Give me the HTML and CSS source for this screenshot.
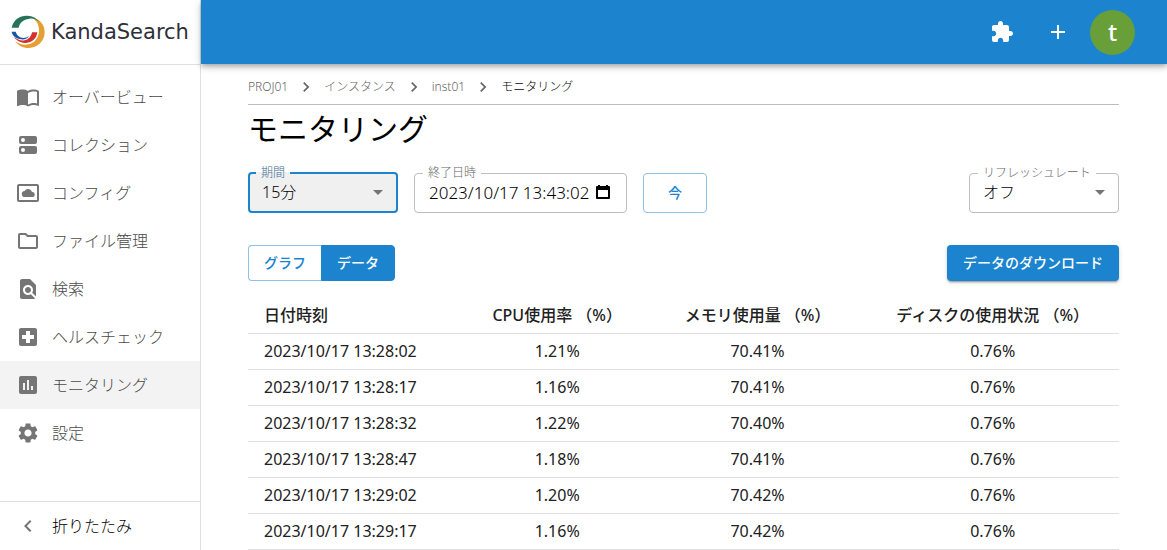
FILE: index.html
```html
<!DOCTYPE html>
<html lang="ja">
<head>
<meta charset="utf-8">
<title>KandaSearch</title>
<link rel="stylesheet" href="styles.css">
</head>
<body>
<div class="app">
  <aside class="sidebar">
    <a class="brand" href="#">
      <svg class="brand-mark" viewBox="33 46 102 102" aria-hidden="true">
        <path fill="#e69f32" d="M98 56C120 58 134 76 134 98C134 124 113 145 86 145C68 145 54 138 46 124C58 134 72 137 85 134C105 130 118 112 117 90C116 74 110 64 98 56Z"/>
        <path fill="#26735a" d="M35 84C40 60 60 47 82 48C98 49 110 55 119 67C108 58 98 55 88 57C70 59 58 70 56 84Z"/>
        <path fill="#d6302f" d="M112 98C110 116 96 129 78 130C62 130 48 122 41 112C52 120 64 124 74 122C86 119 94 110 96 98Z"/>
        <path fill="#1558a5" d="M35 96H47C50 106 58 114 70 115C76 115 82 113 87 109C82 117 74 121 64 119C48 117 38 110 35 96Z"/>
      </svg>
      <span class="brand-name">KandaSearch</span>
    </a>
    <nav class="menu">
      <a class="menu-item" href="#"><svg class="icon" viewBox="0 0 24 24"><path d="M21 5c-1.11-.35-2.33-.5-3.5-.5-1.95 0-4.05.4-5.5 1.5-1.45-1.1-3.55-1.5-5.5-1.5S2.45 4.9 1 6v14.65c0 .25.25.5.5.5.1 0 .15-.05.25-.05C3.1 20.45 5.05 20 6.5 20c1.95 0 4.05.4 5.5 1.5 1.35-.85 3.8-1.5 5.5-1.5 1.65 0 3.35.3 4.75 1.05.1.05.15.05.25.05.25 0 .5-.25.5-.5V6c-.6-.45-1.25-.75-2-1zm0 13.5c-1.1-.35-2.3-.5-3.5-.5-1.7 0-4.15.65-5.5 1.5V8c1.35-.85 3.8-1.5 5.5-1.5 1.2 0 2.4.15 3.5.5v11.5z"/></svg>オーバービュー</a>
      <a class="menu-item" href="#"><svg class="icon" viewBox="0 0 24 24"><path fill-rule="evenodd" d="M5 3h14a2 2 0 0 1 2 2v4a2 2 0 0 1-2 2H5a2 2 0 0 1-2-2V5a2 2 0 0 1 2-2zm2 2a2 2 0 1 0 0 4 2 2 0 0 0 0-4zM5 13h14a2 2 0 0 1 2 2v4a2 2 0 0 1-2 2H5a2 2 0 0 1-2-2v-4a2 2 0 0 1 2-2zm2 2a2 2 0 1 0 0 4 2 2 0 0 0 0-4z"/></svg>コレクション</a>
      <a class="menu-item" href="#"><svg class="icon" viewBox="0 0 24 24"><path fill-rule="evenodd" d="M3 3h18a2 2 0 0 1 2 2v14a2 2 0 0 1-2 2H3a2 2 0 0 1-2-2V5a2 2 0 0 1 2-2zm0 2v14h18V5z"/><path d="M9 16a3 3 0 0 1-.4-6A4 4 0 0 1 16 11a2.500 2.500 0 0 1 .5 5z"/></svg>コンフィグ</a>
      <a class="menu-item" href="#"><svg class="icon" viewBox="0 0 24 24"><path d="M9.170 6l2 2H20v10H4V6h5.170M10 4H4c-1.100 0-1.990.9-1.990 2L2 18c0 1.100.9 2 2 2h16c1.100 0 2-.9 2-2V8c0-1.100-.9-2-2-2h-8l-2-2z"/></svg>ファイル管理</a>
      <a class="menu-item" href="#"><svg class="icon" viewBox="0 0 24 24"><path d="M20 19.590V8l-6-6H6c-1.100 0-1.990.9-1.990 2L4 20c0 1.100.89 2 1.990 2H18c.45 0 .85-.15 1.190-.4l-4.430-4.430c-.8.52-1.740.83-2.760.83-2.760 0-5-2.240-5-5s2.240-5 5-5 5 2.240 5 5c0 1.020-.31 1.960-.83 2.750L20 19.590zM9 13c0 1.660 1.340 3 3 3s3-1.340 3-3-1.340-3-3-3-3 1.340-3 3z"/></svg>検索</a>
      <a class="menu-item" href="#"><svg class="icon" viewBox="0 0 24 24"><path d="M19 3H5c-1.100 0-2 .9-2 2v14c0 1.100.9 2 2 2h14c1.100 0 2-.9 2-2V5c0-1.100-.9-2-2-2zm-1 11h-4v4h-4v-4H6v-4h4V6h4v4h4v4z"/></svg>ヘルスチェック</a>
      <a class="menu-item is-active" href="#" aria-current="page"><svg class="icon" viewBox="0 0 24 24"><path d="M19 3H5c-1.100 0-2 .9-2 2v14c0 1.100.9 2 2 2h14c1.100 0 2-.9 2-2V5c0-1.100-.9-2-2-2zM9 17H7v-7h2v7zm4 0h-2V7h2v10zm4 0h-2v-4h2v4z"/></svg>モニタリング</a>
      <a class="menu-item" href="#"><svg class="icon" viewBox="0 0 24 24"><path d="M19.140 12.940c.04-.3.06-.61.06-.94 0-.32-.02-.64-.07-.94l2.030-1.580c.18-.14.23-.41.12-.61l-1.920-3.320c-.12-.22-.37-.29-.59-.22l-2.390.96c-.5-.38-1.030-.7-1.620-.94l-.36-2.540c-.04-.24-.24-.41-.48-.41h-3.840c-.24 0-.43.17-.47.41l-.36 2.540c-.59.24-1.130.57-1.620.94l-2.390-.96c-.22-.08-.47 0-.59.22L2.740 8.870c-.12.21-.08.47.12.61l2.030 1.580c-.05.3-.09.63-.09.94s.02.64.07.94l-2.030 1.580c-.18.14-.23.41-.12.61l1.920 3.320c.12.22.37.29.59.22l2.390-.96c.5.38 1.030.7 1.620.94l.36 2.540c.05.24.24.41.48.41h3.840c.24 0 .44-.17.47-.41l.36-2.540c.59-.24 1.130-.56 1.620-.94l2.390.96c.22.08.47 0 .59-.22l1.920-3.320c.12-.22.07-.47-.12-.61l-2.010-1.580zM12 15.600c-1.980 0-3.600-1.620-3.600-3.600s1.620-3.600 3.600-3.600 3.600 1.620 3.600 3.600-1.620 3.600-3.600 3.600z"/></svg>設定</a>
    </nav>
    <button class="collapse" type="button"><svg class="icon" viewBox="0 0 24 24"><path d="M15.410 7.410L14 6l-6 6 6 6 1.410-1.410L10.830 12z"/></svg>折りたたみ</button>
  </aside>

  <div class="page">
    <header class="topbar">
      <button class="icon-button" type="button" aria-label="拡張機能"><svg class="icon" viewBox="0 0 24 24"><path d="M20.500 11H19V7c0-1.100-.9-2-2-2h-4V3.500C13 2.120 11.880 1 10.500 1S8 2.120 8 3.500V5H4c-1.100 0-1.990.9-1.990 2v3.800H3.500c1.490 0 2.700 1.210 2.700 2.700s-1.210 2.700-2.700 2.700H2V20c0 1.100.9 2 2 2h3.800v-1.500c0-1.490 1.210-2.700 2.700-2.700 1.490 0 2.700 1.210 2.700 2.700V22H17c1.100 0 2-.9 2-2v-4h1.500c1.380 0 2.500-1.120 2.500-2.500S21.880 11 20.500 11z"/></svg></button>
      <button class="icon-button" type="button" aria-label="追加"><svg class="icon" viewBox="0 0 24 24"><path d="M19 13h-6v6h-2v-6H5v-2h6V5h2v6h6v2z"/></svg></button>
      <button class="avatar" type="button">t</button>
    </header>

    <main class="content">
      <nav class="crumbs">
        <a href="#">PROJ01</a>
        <svg class="crumb-sep" viewBox="0 0 24 24"><path d="M10 6L8.590 7.410 13.170 12l-4.580 4.590L10 18l6-6z"/></svg>
        <a href="#">インスタンス</a>
        <svg class="crumb-sep" viewBox="0 0 24 24"><path d="M10 6L8.590 7.410 13.170 12l-4.580 4.590L10 18l6-6z"/></svg>
        <a href="#">inst01</a>
        <svg class="crumb-sep" viewBox="0 0 24 24"><path d="M10 6L8.590 7.410 13.170 12l-4.580 4.590L10 18l6-6z"/></svg>
        <span class="crumb-current">モニタリング</span>
      </nav>
      <h1 class="title">モニタリング</h1>

      <div class="filters">
        <fieldset class="field is-focused">
          <legend><label for="period">期間</label></legend>
          <div class="control">
            <select id="period"><option>15分</option></select>
            <svg class="arrow" viewBox="0 0 24 24"><path d="M7 10l5 5 5-5z"/></svg>
          </div>
        </fieldset>
        <fieldset class="field field-date">
          <legend><label for="end">終了日時</label></legend>
          <div class="control">
            <input id="end" type="text" value="2023/10/17 13:43:02">
            <button class="calendar" type="button" aria-label="日付を選択"><svg viewBox="0 0 16 16"><path fill-rule="evenodd" d="M3 1h2v1h6V1h2v1h1a1 1 0 0 1 1 1v11a1 1 0 0 1-1 1H2a1 1 0 0 1-1-1V3a1 1 0 0 1 1-1h1zM3 6v7h10V6z"/></svg></button>
          </div>
        </fieldset>
        <button class="now" type="button">今</button>
        <fieldset class="field field-end">
          <legend><label for="refresh">リフレッシュレート</label></legend>
          <div class="control">
            <select id="refresh"><option>オフ</option></select>
            <svg class="arrow" viewBox="0 0 24 24"><path d="M7 10l5 5 5-5z"/></svg>
          </div>
        </fieldset>
      </div>

      <div class="actions">
        <div class="toggle">
          <button type="button">グラフ</button>
          <button type="button" class="is-on" aria-pressed="true">データ</button>
        </div>
        <button class="download" type="button">データのダウンロード</button>
      </div>

      <table class="metrics">
        <colgroup><col class="col-date"><col class="col-cpu"><col class="col-memory"><col class="col-disk"></colgroup>
        <thead>
          <tr><th scope="col">日付時刻</th><th scope="col">CPU使用率 （%）</th><th scope="col">メモリ使用量 （%）</th><th scope="col">ディスクの使用状況 （%）</th></tr>
        </thead>
        <tbody>
          <tr><td>2023/10/17 13:28:02</td><td>1.21%</td><td>70.41%</td><td>0.76%</td></tr>
          <tr><td>2023/10/17 13:28:17</td><td>1.16%</td><td>70.41%</td><td>0.76%</td></tr>
          <tr><td>2023/10/17 13:28:32</td><td>1.22%</td><td>70.40%</td><td>0.76%</td></tr>
          <tr><td>2023/10/17 13:28:47</td><td>1.18%</td><td>70.41%</td><td>0.76%</td></tr>
          <tr><td>2023/10/17 13:29:02</td><td>1.20%</td><td>70.42%</td><td>0.76%</td></tr>
          <tr><td>2023/10/17 13:29:17</td><td>1.16%</td><td>70.42%</td><td>0.76%</td></tr>
        </tbody>
      </table>
    </main>
  </div>
</div>
</body>
</html>
```
FILE: styles.css
```css
* { box-sizing: border-box; }

body {
  margin: 0;
  background: #fff;
  color: #212121;
  font: 300 16px/24px "Noto Sans", "Noto Sans CJK JP", sans-serif;
}

button, input, select { font: inherit; color: inherit; }
button { cursor: pointer; }
a { color: inherit; text-decoration: none; }
svg { display: block; flex: none; fill: currentColor; }

.app { display: flex; min-height: 100vh; }

/* Sidebar */
.sidebar {
  display: flex;
  flex-direction: column;
  flex: none;
  width: 201px;
  border-right: 1px solid #e0e0e0;
}
.brand {
  display: flex;
  align-items: center;
  gap: 6px;
  height: 65px;
  padding-left: 11px;
  border-bottom: 1px solid #e0e0e0;
}
.brand-mark { width: 34px; height: 34px; }
.brand-name { color: #2e2f3a; font: 400 21px/24px "DejaVu Sans", sans-serif; }
.menu { flex: 1; padding-top: 8px; }
.menu-item {
  display: flex;
  align-items: center;
  gap: 12px;
  height: 48px;
  padding: 0 16px;
  color: #4a4a4a;
}
.menu-item.is-active { background: #f3f3f3; }
.icon { width: 24px; height: 24px; }
.menu-item .icon, .collapse .icon { fill: #757575; }
.collapse {
  display: flex;
  align-items: center;
  gap: 12px;
  height: 49px;
  padding: 0 16px;
  border: 0;
  border-top: 1px solid #e0e0e0;
  background: none;
  color: #000;
}

/* Top bar */
.page { flex: 1; min-width: 0; }
.topbar {
  display: flex;
  align-items: center;
  justify-content: flex-end;
  height: 64px;
  padding-right: 32px;
  background: #1c84ce;
  color: #fff;
  box-shadow: 0 2px 4px -1px rgba(0, 0, 0, .2), 0 4px 5px rgba(0, 0, 0, .14), 0 1px 10px rgba(0, 0, 0, .12);
}
.icon-button {
  margin-right: 8px;
  padding: 12px;
  border: 0;
  background: none;
}
.icon-button + .avatar { margin-left: 0; }
.avatar {
  width: 45px;
  height: 45px;
  padding: 0;
  border: 0;
  border-radius: 50%;
  background: #689f38;
  font-size: 24px;
  font-weight: 500;
}

/* Content */
.content { padding: 8px 48px 0 47px; }
.crumbs {
  display: flex;
  align-items: center;
  height: 33px;
  padding-bottom: 3px;
  border-bottom: 1px solid #bdbdbd;
  color: #666;
  font-size: 12px;
}
.crumb-sep { width: 20px; height: 20px; margin: 0 8px; }
.crumb-current { color: #000; }
.title { margin: 2px 0 0; color: #000; font-size: 30px; font-weight: 400; line-height: 44px; }

.filters { display: flex; align-items: flex-end; gap: 16px; padding-top: 16px; }
.field {
  width: 150px;
  height: 46px;
  min-width: 0;
  margin: 0;
  padding: 0;
  border: 1px solid #bdbdbd;
  border-radius: 4px;
}
.field legend {
  height: 12px;
  margin-left: 8px;
  padding: 0 5px;
  color: #666;
  font-size: 12px;
  line-height: 12px;
}
.field.is-focused { border: 2px solid #1c84ce; background: #f0f0f0; }
.field.is-focused legend { margin-left: 6px; color: #3f6c92; }
.field-date { width: 213px; }
.field-end { margin-left: auto; }
.control { display: flex; align-items: center; height: 26px; padding-right: 6px; }
.control select, .control input {
  flex: 1;
  min-width: 0;
  height: 26px;
  padding: 0 0 0 13px;
  border: 0;
  outline: 0;
  appearance: none;
  background: none;
  color: #000;
}
.field.is-focused select { padding-left: 12px; }
.control input { padding-left: 14px; font-size: 17px; }
.control .arrow { width: 24px; height: 24px; fill: #757575; }
.calendar { padding: 0 9px 0 0; border: 0; background: none; color: #000; }
.calendar svg { width: 16px; height: 16px; }
.now {
  width: 64px;
  height: 40px;
  border: 1px solid #8dc1e6;
  border-radius: 4px;
  background: none;
  color: #1c84ce;
  font-size: 14px;
  font-weight: 500;
}

.actions { display: flex; justify-content: space-between; padding: 32px 0 16px; }
.actions button { height: 36px; padding: 0 15px; font-size: 14px; font-weight: 500; }
.toggle { display: flex; }
.toggle button {
  border: 1px solid #8dc1e6;
  border-right: 0;
  border-radius: 4px 0 0 4px;
  background: none;
  color: #1c84ce;
}
.toggle .is-on {
  border: 1px solid #1c84ce;
  border-radius: 0 4px 4px 0;
  background: #1c84ce;
  color: #fff;
}
.actions .download {
  padding: 0 16px;
  border: 0;
  border-radius: 4px;
  background: #1c84ce;
  color: #fff;
  box-shadow: 0 3px 1px -2px rgba(0, 0, 0, .2), 0 2px 2px rgba(0, 0, 0, .14), 0 1px 5px rgba(0, 0, 0, .12);
}

.metrics { width: 100%; border-collapse: collapse; font-weight: 400; }
.metrics th, .metrics td {
  height: 36px;
  padding: 0 16px;
  border-bottom: 1px solid #e0e0e0;
  text-align: center;
  white-space: nowrap;
}
.metrics th { font-weight: 500; }
.metrics th:first-child, .metrics td:first-child { text-align: left; }
.col-date { width: 25%; }
.col-cpu { width: 21%; }
.col-memory { width: 25%; }
.col-disk { width: 29%; }
```
